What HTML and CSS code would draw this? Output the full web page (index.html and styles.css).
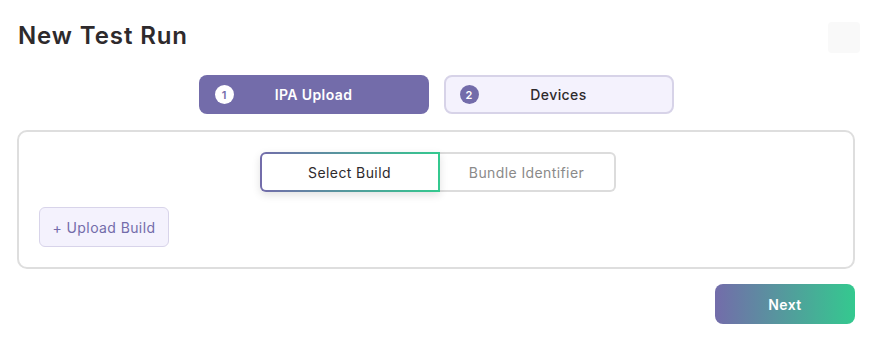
FILE: index.html
```html
<!DOCTYPE html>
<html>
<head>
<meta charset="utf-8">
<link rel="stylesheet" href="styles.css">
</head>
<body>
<div class="page">
  <header class="header">
    <h1 class="title">New Test Run</h1>
    <div class="corner"></div>
  </header>
  <nav class="steps">
    <div class="step step-active"><span class="num">1</span><span class="label">IPA Upload</span></div>
    <div class="step step-idle"><span class="num">2</span><span class="label">Devices</span></div>
  </nav>
  <section class="card">
    <div class="seg">
      <div class="seg-btn seg-active"><span>Select Build</span></div>
      <div class="seg-btn seg-idle">Bundle Identifier</div>
    </div>
    <div class="upload-row">
      <button class="upload">+ Upload Build</button>
    </div>
  </section>
  <div class="footer">
    <button class="next">Next</button>
  </div>
</div>
</body>
</html>
```
FILE: styles.css
```css
* { box-sizing: border-box; }
body {
  margin: 0;
  background: #fff;
  font-family: Inter, "Noto Sans", sans-serif;
  color: #2e2a2c;
  letter-spacing: 0.4px;
}
.page {
  padding: 0 17px 0 17px;
  width: 872px;
  height: 357px;
}
.header {
  display: flex;
  justify-content: space-between;
  align-items: flex-start;
  height: 75px;
}
.title {
  margin: 20px 0 0 1px;
  font-size: 24px;
  font-weight: 600;
  line-height: 32px;
  letter-spacing: 0.9px;
  color: #2e2a2c;
}
.corner {
  width: 32px;
  height: 31px;
  margin-top: 22px;
  margin-right: -5px;
  background: #f9f9f9;
  border-radius: 4px;
}
.steps {
  display: flex;
  justify-content: center;
  gap: 15px;
  height: 55px;
}
.step {
  width: 230px;
  height: 39px;
  border-radius: 8px;
  display: flex;
  align-items: center;
  padding-left: 16px;
  font-size: 14px;
  font-weight: 600;
}
.step .num {
  width: 19px;
  height: 19px;
  border-radius: 50%;
  display: flex;
  align-items: center;
  justify-content: center;
  font-size: 11px;
  font-weight: 600;
  letter-spacing: 0;
}
.step .label {
  flex: 1;
  text-align: center;
  padding-right: 35px;
}
.step-active {
  background: #736caa;
  color: #fff;
}
.step-active .num {
  background: #fff;
  color: #736caa;
}
.step-idle {
  background: #f4f2fd;
  border: 2px solid #d7d3e8;
  color: #2e2a2c;
  padding-left: 14px;
  font-weight: 500;
}
.step-idle .label { padding-right: 33px; }
.step-idle .num {
  background: #736caa;
  color: #fff;
}
.card {
  border: 2px solid #dedede;
  border-radius: 10px;
  height: 139px;
  padding: 20px 20px 0 20px;
}
.seg {
  display: flex;
  justify-content: center;
  padding-left: 3px;
}
.seg-btn {
  height: 40px;
  display: flex;
  align-items: center;
  justify-content: center;
  font-size: 14px;
}
.seg-active {
  width: 180px;
  border-radius: 6px 0 0 6px;
  padding: 2px;
  background: linear-gradient(90deg, #736caa, #34c98f);
  box-shadow: 0 3px 8px rgba(0,0,0,0.12);
  position: relative;
  z-index: 1;
}
.seg-active span {
  width: 100%;
  height: 100%;
  background: #fff;
  border-radius: 4px 0 0 4px;
  display: flex;
  align-items: center;
  justify-content: center;
  color: #2e2a2c;
}
.seg-idle {
  width: 176px;
  border: 2px solid #dcdcdc;
  border-left: none;
  border-radius: 0 6px 6px 0;
  color: #8a8a8a;
}
.upload-row {
  margin-top: 15px;
}
.upload {
  height: 40px;
  width: 130px;
  background: #f4f2fd;
  border: 1px solid #d8d4ea;
  border-radius: 6px;
  font-family: inherit;
  font-size: 14px;
  letter-spacing: 0.4px;
  color: #736caa;
  padding: 0;
}
.footer {
  display: flex;
  justify-content: flex-end;
  margin-top: 15px;
}
.next {
  width: 140px;
  height: 40px;
  border: none;
  border-radius: 8px;
  background: linear-gradient(90deg, #736caa, #34c98f);
  color: #fff;
  font-family: inherit;
  font-size: 14px;
  letter-spacing: 0.4px;
  font-weight: 600;
}
```
